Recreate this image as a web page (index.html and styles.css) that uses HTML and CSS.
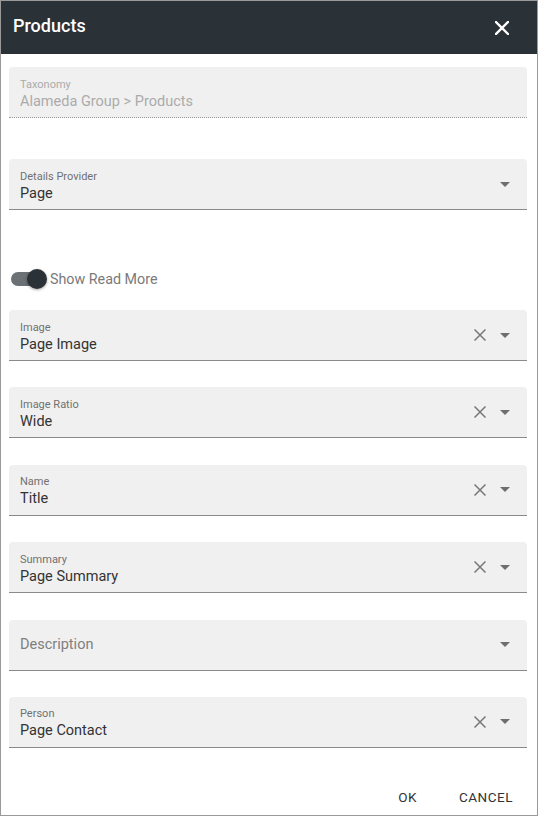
FILE: index.html
```html
<!DOCTYPE html>
<html>
<head>
<meta charset="utf-8">
<link rel="stylesheet" href="styles.css">
</head>
<body>
<div class="dialog">
  <header class="header">
    <h1 class="title">Products</h1>
    <button class="close" aria-label="Close">
      <svg width="14" height="14" viewBox="0 0 14 14"><path d="M1 1L13 13M13 1L1 13" stroke="#fff" stroke-width="2.4" stroke-linecap="square"/></svg>
    </button>
  </header>
  <main class="content">
    <div class="field disabled">
      <div class="field-text">
        <span class="label">Taxonomy</span>
        <span class="value">Alameda Group &gt; Products</span>
      </div>
    </div>

    <div class="field provider">
      <div class="field-text">
        <span class="label">Details Provider</span>
        <span class="value">Page</span>
      </div>
      <div class="icons">
        <span class="arrow"></span>
      </div>
    </div>

    <div class="toggle-row">
      <span class="switch"><span class="track"></span><span class="thumb"></span></span>
      <span class="toggle-label">Show Read More</span>
    </div>

    <div class="field">
      <div class="field-text"><span class="label">Image</span><span class="value">Page Image</span></div>
      <div class="icons"><svg class="clear" width="12" height="12" viewBox="0 0 12 12"><path d="M0.5 0.5L11.5 11.5M11.5 0.5L0.5 11.5" stroke="#777" stroke-width="1.5"/></svg><span class="arrow"></span></div>
    </div>

    <div class="field">
      <div class="field-text"><span class="label">Image Ratio</span><span class="value">Wide</span></div>
      <div class="icons"><svg class="clear" width="12" height="12" viewBox="0 0 12 12"><path d="M0.5 0.5L11.5 11.5M11.5 0.5L0.5 11.5" stroke="#777" stroke-width="1.5"/></svg><span class="arrow"></span></div>
    </div>

    <div class="field">
      <div class="field-text"><span class="label">Name</span><span class="value">Title</span></div>
      <div class="icons"><svg class="clear" width="12" height="12" viewBox="0 0 12 12"><path d="M0.5 0.5L11.5 11.5M11.5 0.5L0.5 11.5" stroke="#777" stroke-width="1.5"/></svg><span class="arrow"></span></div>
    </div>

    <div class="field">
      <div class="field-text"><span class="label">Summary</span><span class="value">Page Summary</span></div>
      <div class="icons"><svg class="clear" width="12" height="12" viewBox="0 0 12 12"><path d="M0.5 0.5L11.5 11.5M11.5 0.5L0.5 11.5" stroke="#777" stroke-width="1.5"/></svg><span class="arrow"></span></div>
    </div>

    <div class="field">
      <div class="field-text"><span class="placeholder">Description</span></div>
      <div class="icons"><span class="arrow"></span></div>
    </div>

    <div class="field">
      <div class="field-text"><span class="label">Person</span><span class="value">Page Contact</span></div>
      <div class="icons"><svg class="clear" width="12" height="12" viewBox="0 0 12 12"><path d="M0.5 0.5L11.5 11.5M11.5 0.5L0.5 11.5" stroke="#777" stroke-width="1.5"/></svg><span class="arrow"></span></div>
    </div>
  </main>
  <footer class="actions">
    <button class="btn">OK</button>
    <button class="btn">CANCEL</button>
  </footer>
</div>
</body>
</html>
```
FILE: styles.css
```css
* { box-sizing: border-box; }
html, body { margin: 0; padding: 0; background: #fff; }
body { font-family: Roboto, "Liberation Sans", sans-serif; }

.dialog {
  width: 538px;
  height: 816px;
  border: 1px solid #9a9a9a;
  display: flex;
  flex-direction: column;
  background: #fff;
}

.header {
  height: 53px;
  background: #2a3238;
  display: flex;
  align-items: center;
  justify-content: space-between;
  padding: 0 28px 0 12px;
  flex-shrink: 0;
}
.title {
  margin: 0;
  color: #fff;
  font-size: 18px;
  font-weight: 500;
  line-height: 1;
  padding-bottom: 3px;
}
.close {
  background: none;
  border: 0;
  padding: 0;
  width: 14px;
  height: 14px;
  display: flex;
}

.content {
  flex: 1;
  padding: 13px 10px 0 8px;
  display: flex;
  flex-direction: column;
}

.field {
  height: 51px;
  background: #f0f0f0;
  border-radius: 4px 4px 0 0;
  border-bottom: 1px solid #8a8a8a;
  display: flex;
  align-items: center;
  padding: 0 17px 0 11px;
  margin-bottom: 26.4px;
  flex-shrink: 0;
}
.field.disabled {
  border-bottom: 1px dotted #9a9a9a;
  margin-bottom: 41px;
}
.field.provider { margin-bottom: 57px; }

.field-text {
  flex: 1;
  display: flex;
  flex-direction: column;
  padding-top: 3px;
}
.label {
  font-size: 11px;
  line-height: 13px;
  color: #707070;
  margin-bottom: 2px;
}
.value {
  font-size: 14.5px;
  line-height: 17px;
  color: #333;
}
.disabled .label, .disabled .value { color: #ababab; }
.placeholder {
  font-size: 14.5px;
  color: #7f7f7f;
  margin-top: -3px;
}

.icons {
  display: flex;
  align-items: center;
  gap: 14px;
}
.clear { display: block; }
.arrow {
  width: 0;
  height: 0;
  border-left: 5px solid transparent;
  border-right: 5px solid transparent;
  border-top: 5px solid #6e6e6e;
}

.toggle-row {
  height: 24px;
  display: flex;
  align-items: center;
  margin-bottom: 19px;
  padding-left: 2px;
}
.switch {
  position: relative;
  width: 34px;
  height: 20px;
  display: inline-block;
  margin-right: 5px;
}
.track {
  position: absolute;
  left: 0;
  top: 3px;
  width: 32px;
  height: 14px;
  border-radius: 7px;
  background: #6c7176;
}
.thumb {
  position: absolute;
  right: -2px;
  top: 0;
  width: 20px;
  height: 20px;
  border-radius: 50%;
  background: #2a3238;
  box-shadow: 0 1px 3px rgba(0,0,0,0.35);
}
.toggle-label {
  font-size: 14.3px;
  color: #7a7a7a;
}

.actions {
  height: 46px;
  display: flex;
  justify-content: flex-end;
  align-items: flex-start;
  padding: 15px 24px 0 0;
  gap: 42px;
  flex-shrink: 0;
}
.btn {
  background: none;
  border: 0;
  padding: 0;
  font-family: Roboto, "Liberation Sans", sans-serif;
  font-size: 13.5px;
  font-weight: 400;
  letter-spacing: 0.5px;
  color: #333;
}
```
